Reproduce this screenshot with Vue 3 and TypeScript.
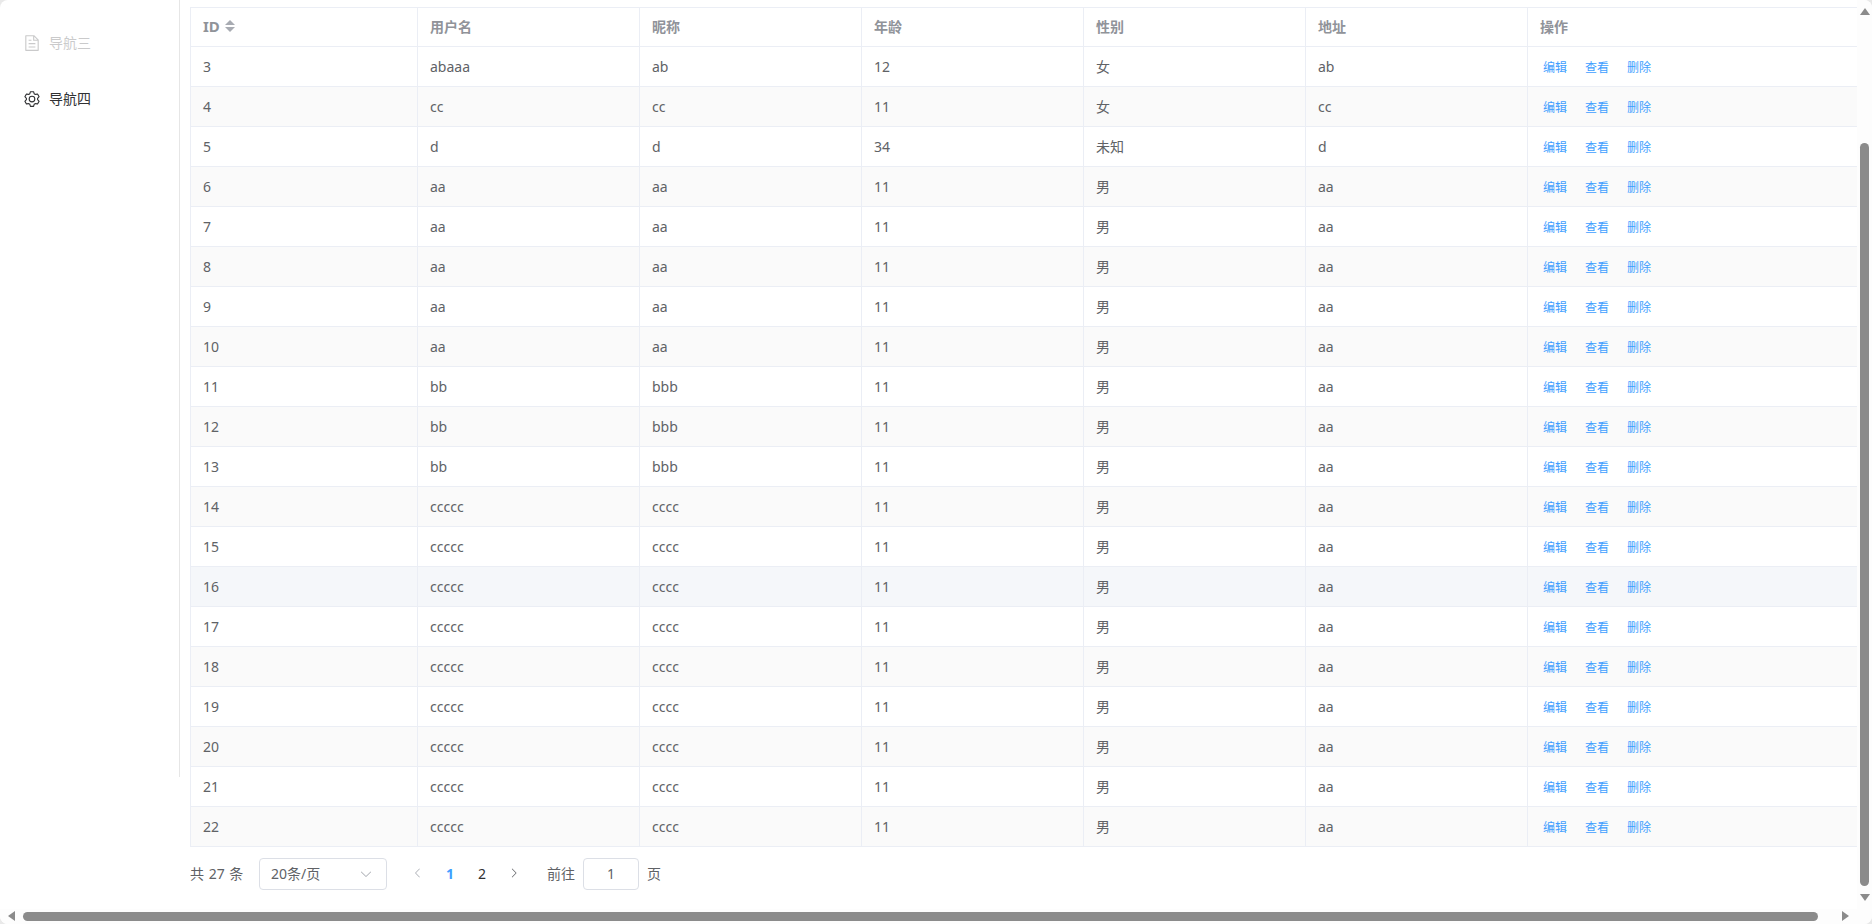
<script setup lang="ts">
interface UserRow {
  id: number
  username: string
  nickname: string
  age: number
  gender: string
  address: string
}

const makeRows = (from: number, to: number, username: string, nickname: string): UserRow[] => {
  const list: UserRow[] = []
  for (let id = from; id <= to; id++) {
    list.push({ id, username, nickname, age: 11, gender: '男', address: 'aa' })
  }
  return list
}

const rows: UserRow[] = [
  { id: 3, username: 'abaaa', nickname: 'ab', age: 12, gender: '女', address: 'ab' },
  { id: 4, username: 'cc', nickname: 'cc', age: 11, gender: '女', address: 'cc' },
  { id: 5, username: 'd', nickname: 'd', age: 34, gender: '未知', address: 'd' },
  ...makeRows(6, 10, 'aa', 'aa'),
  ...makeRows(11, 13, 'bb', 'bbb'),
  ...makeRows(14, 22, 'ccccc', 'cccc')
]

const actions = ['编辑', '查看', '删除']
</script>

<template>
  <div class="page">
    <aside class="sidebar">
      <ul class="menu">
        <li class="menu-item disabled">
          <span class="menu-icon">
            <svg viewBox="0 0 1024 1024" fill="currentColor"><path d="M832 384H576V128H192v768h640V384zm-26.496-64L640 154.496V320h165.504zM160 64h480l256 256v608a32 32 0 0 1-32 32H160a32 32 0 0 1-32-32V96a32 32 0 0 1 32-32zm160 448h384v64H320v-64zm0-192h160v64H320v-64zm0 384h384v64H320v-64z" /></svg>
          </span>
          <span class="menu-label">导航三</span>
        </li>
        <li class="menu-item">
          <span class="menu-icon">
            <svg viewBox="0 0 1024 1024" fill="currentColor"><path d="M600.704 64a32 32 0 0 1 30.464 22.208l35.2 109.376c14.784 7.232 28.928 15.36 42.432 24.512l112.384-24.192a32 32 0 0 1 34.432 15.36L944.32 364.8a32 32 0 0 1-4.032 37.504l-77.12 85.12a357.12 357.12 0 0 1 0 49.024l77.12 85.248a32 32 0 0 1 4.032 37.504l-88.704 153.6a32 32 0 0 1-34.432 15.296L708.8 803.904c-13.44 9.088-27.648 17.28-42.368 24.512l-35.264 109.376A32 32 0 0 1 600.704 960H423.296a32 32 0 0 1-30.464-22.208L357.696 828.48a351.616 351.616 0 0 1-42.56-24.64l-112.32 24.256a32 32 0 0 1-34.432-15.36L79.68 659.2a32 32 0 0 1 4.032-37.504l77.12-85.248a357.12 357.12 0 0 1 0-48.896l-77.12-85.248A32 32 0 0 1 79.68 364.8l88.704-153.6a32 32 0 0 1 34.432-15.296l112.32 24.256c13.568-9.152 27.776-17.408 42.56-24.64l35.2-109.312A32 32 0 0 1 423.232 64H600.64zm-23.424 64H446.72l-36.352 113.088-24.512 11.968a294.113 294.113 0 0 0-34.816 20.096l-22.656 15.36-116.224-25.088-65.28 113.152 79.68 88.192-1.92 27.136a293.12 293.12 0 0 0 0 40.192l1.92 27.136-79.808 88.192 65.344 113.152 116.224-25.024 22.656 15.296a294.113 294.113 0 0 0 34.816 20.096l24.512 11.968L446.72 896h130.688l36.48-113.152 24.448-11.904a288.282 288.282 0 0 0 34.752-20.096l22.592-15.296 116.288 25.024 65.28-113.152-79.744-88.192 1.92-27.136a293.12 293.12 0 0 0 0-40.256l-1.92-27.136 79.808-88.128-65.344-113.152-116.288 24.96-22.592-15.232a287.616 287.616 0 0 0-34.752-20.096l-24.448-11.904L577.344 128zM512 320a192 192 0 1 1 0 384 192 192 0 0 1 0-384zm0 64a128 128 0 1 0 0 256 128 128 0 0 0 0-256z" /></svg>
          </span>
          <span class="menu-label">导航四</span>
        </li>
      </ul>
    </aside>

    <main class="content">
      <table class="user-table">
        <colgroup>
          <col class="col-id" />
          <col v-for="i in 5" :key="i" class="col-normal" />
          <col class="col-ops" />
        </colgroup>
        <thead>
          <tr>
            <th>
              <span class="id-head">
                ID
                <span class="sort-caret">
                  <i class="caret-up"></i>
                  <i class="caret-down"></i>
                </span>
              </span>
            </th>
            <th>用户名</th>
            <th>昵称</th>
            <th>年龄</th>
            <th>性别</th>
            <th>地址</th>
            <th>操作</th>
          </tr>
        </thead>
        <tbody>
          <tr
            v-for="(row, index) in rows"
            :key="row.id"
            :class="{ striped: index % 2 === 1, hovered: row.id === 16 }"
          >
            <td>{{ row.id }}</td>
            <td>{{ row.username }}</td>
            <td>{{ row.nickname }}</td>
            <td>{{ row.age }}</td>
            <td class="cjk-cell">{{ row.gender }}</td>
            <td>{{ row.address }}</td>
            <td>
              <div class="actions">
                <a v-for="action in actions" :key="action">{{ action }}</a>
              </div>
            </td>
          </tr>
        </tbody>
      </table>

      <div class="pagination">
        <span class="total">共 27 条</span>
        <div class="size-select">
          <span class="select-text">20条/页</span>
          <svg class="select-arrow" viewBox="0 0 1024 1024" fill="currentColor"><path d="M831.872 340.864 512 652.672 192.128 340.864a30.592 30.592 0 0 0-42.752 0 29.12 29.12 0 0 0 0 41.6L489.664 714.24a32 32 0 0 0 44.672 0l340.288-331.712a29.12 29.12 0 0 0 0-41.728 30.592 30.592 0 0 0-42.752 0z" /></svg>
        </div>
        <button class="page-btn prev">
          <svg viewBox="0 0 1024 1024" fill="currentColor"><path d="M609.408 149.376 277.76 489.6a32 32 0 0 0 0 44.672l331.648 340.352a29.12 29.12 0 0 0 41.728 0 30.592 30.592 0 0 0 0-42.752L339.264 511.936l311.872-319.872a30.592 30.592 0 0 0 0-42.688 29.12 29.12 0 0 0-41.728 0z" /></svg>
        </button>
        <button class="page-btn number active">1</button>
        <button class="page-btn number">2</button>
        <button class="page-btn next">
          <svg viewBox="0 0 1024 1024" fill="currentColor"><path d="M340.864 149.312a30.592 30.592 0 0 0 0 42.752L652.736 512 340.864 831.872a30.592 30.592 0 0 0 0 42.752 29.12 29.12 0 0 0 41.728 0L714.24 534.336a32 32 0 0 0 0-44.672L382.592 149.376a29.12 29.12 0 0 0-41.728 0z" /></svg>
        </button>
        <span class="jump">前往</span>
        <div class="jump-input">1</div>
        <span class="jump-suffix">页</span>
      </div>
    </main>

    <!-- page scrollbars, drawn over the content -->
    <div class="scroll-y">
      <i class="arrow arrow-up"></i>
      <div class="thumb-y"></div>
      <i class="arrow arrow-down"></i>
    </div>
    <div class="scroll-x">
      <i class="arrow arrow-left"></i>
      <div class="thumb-x"></div>
      <i class="arrow arrow-right"></i>
    </div>
    <div class="scroll-corner"></div>
  </div>
</template>

<style>
html,
body {
  margin: 0;
  background: #e9e9e9;
  overflow: hidden;
}
</style>

<style scoped>
.page {
  position: relative;
  display: flex;
  align-items: flex-start;
  width: 1872px;
  height: 924px;
  overflow: hidden;
  background: #fff;
  border-radius: 8px;
  font-family: "Noto Sans", "Noto Sans CJK SC", sans-serif;
  font-size: 14px;
  color: #606266;
}

.sidebar {
  flex: none;
  box-sizing: border-box;
  width: 180px;
  height: 777px;
  padding-top: 15px;
  border-right: 1px solid #e6e6e6;
}

.menu {
  margin: 0;
  padding: 0;
  list-style: none;
}

.menu-item {
  display: flex;
  align-items: center;
  height: 56px;
  padding-left: 20px;
  color: #303133;
}

.menu-item.disabled {
  opacity: 0.25;
}

.menu-label {
  padding-bottom: 2px;
}

.menu-icon {
  display: flex;
  justify-content: center;
  width: 24px;
  margin-right: 5px;
}

.menu-icon svg {
  width: 18px;
  height: 18px;
}

.content {
  flex: none;
  width: 1667px;
  margin-left: 10px;
  padding-top: 7px;
}

.user-table {
  width: 1667px;
  table-layout: fixed;
  border-collapse: separate;
  border-spacing: 0;
  border-left: 1px solid #ebeef5;
  box-sizing: border-box;
}

.col-id {
  width: 227px;
}

.col-normal {
  width: 222px;
}

.col-ops {
  width: 329px;
}

th,
td {
  box-sizing: border-box;
  height: 40px;
  padding: 0 12px;
  text-align: left;
  border-right: 1px solid #ebeef5;
  border-bottom: 1px solid #ebeef5;
}

th {
  padding-bottom: 2px;
  border-top: 1px solid #ebeef5;
  color: #909399;
  font-weight: 700;
}

th:last-child,
td:last-child {
  border-right: none;
}

td.cjk-cell {
  padding-bottom: 2px;
}

.striped td {
  background: #fafafa;
}

.hovered td {
  background: #f5f7fa;
}

.id-head {
  display: inline-flex;
  align-items: center;
  font-size: 15px;
}

.sort-caret {
  display: inline-flex;
  flex-direction: column;
  gap: 2px;
  margin-left: 5px;
}

.sort-caret i {
  display: block;
  width: 0;
  height: 0;
  border-left: 5px solid transparent;
  border-right: 5px solid transparent;
}

.caret-up {
  border-bottom: 5px solid #a8abb2;
}

.caret-down {
  border-top: 5px solid #a8abb2;
}

.actions {
  display: flex;
  gap: 18px;
  padding: 1px 0 0 3px;
  font-size: 12px;
  color: #409eff;
}

.pagination {
  display: flex;
  align-items: center;
  height: 32px;
  margin-top: 11px;
  font-size: 14px;
}

.total {
  flex: none;
  width: 69px;
  padding-bottom: 2px;
  word-spacing: 1px;
}

.size-select {
  display: flex;
  align-items: center;
  justify-content: space-between;
  box-sizing: border-box;
  width: 128px;
  height: 32px;
  padding: 0 13px 0 11px;
  border: 1px solid #dcdfe6;
  border-radius: 4px;
  font-size: 14px;
}

.select-text {
  padding-bottom: 3px;
}

.select-arrow {
  width: 14px;
  height: 14px;
  color: #a8abb2;
}

.page-btn {
  display: flex;
  align-items: center;
  justify-content: center;
  width: 32px;
  height: 32px;
  padding: 0 0 2px;
  border: none;
  background: none;
  font-family: inherit;
  font-size: 14px;
  color: #303133;
}

.page-btn svg {
  width: 12px;
  height: 12px;
}

.prev {
  margin-left: 15px;
  color: #a8abb2;
}

.next {
  color: #606266;
}

.number.active {
  color: #409eff;
  font-weight: 700;
}

.jump {
  margin-left: 17px;
  padding-bottom: 2px;
}

.jump-suffix {
  padding-bottom: 2px;
}

.jump-input {
  box-sizing: border-box;
  width: 56px;
  height: 32px;
  margin: 0 8px;
  border: 1px solid #dcdfe6;
  border-radius: 4px;
  font-size: 14px;
  line-height: 30px;
  text-align: center;
}

.scroll-y {
  position: absolute;
  top: 0;
  right: 0;
  width: 15px;
  height: 909px;
  background: #fdfdfd;
}

.thumb-y {
  position: absolute;
  top: 143px;
  left: 3px;
  width: 9px;
  height: 743px;
  border-radius: 5px;
  background: #8b8b8b;
}

.scroll-x {
  position: absolute;
  left: 0;
  bottom: 0;
  width: 1857px;
  height: 15px;
  background: #fdfdfd;
}

.thumb-x {
  position: absolute;
  top: 3px;
  left: 23px;
  width: 1795px;
  height: 9px;
  border-radius: 5px;
  background: #8b8b8b;
}

.scroll-corner {
  position: absolute;
  right: 0;
  bottom: 0;
  width: 15px;
  height: 15px;
  background: #fdfdfd;
}

.arrow {
  position: absolute;
  width: 0;
  height: 0;
}

.arrow-up,
.arrow-down {
  left: 3px;
  border-left: 5px solid transparent;
  border-right: 5px solid transparent;
}

.arrow-up {
  top: 8px;
  border-bottom: 7px solid #8b8b8b;
}

.arrow-down {
  bottom: 8px;
  border-top: 7px solid #8b8b8b;
}

.arrow-left,
.arrow-right {
  top: 2px;
  border-top: 5px solid transparent;
  border-bottom: 5px solid transparent;
}

.arrow-left {
  left: 8px;
  border-right: 7px solid #8b8b8b;
}

.arrow-right {
  right: 8px;
  border-left: 7px solid #8b8b8b;
}
</style>
